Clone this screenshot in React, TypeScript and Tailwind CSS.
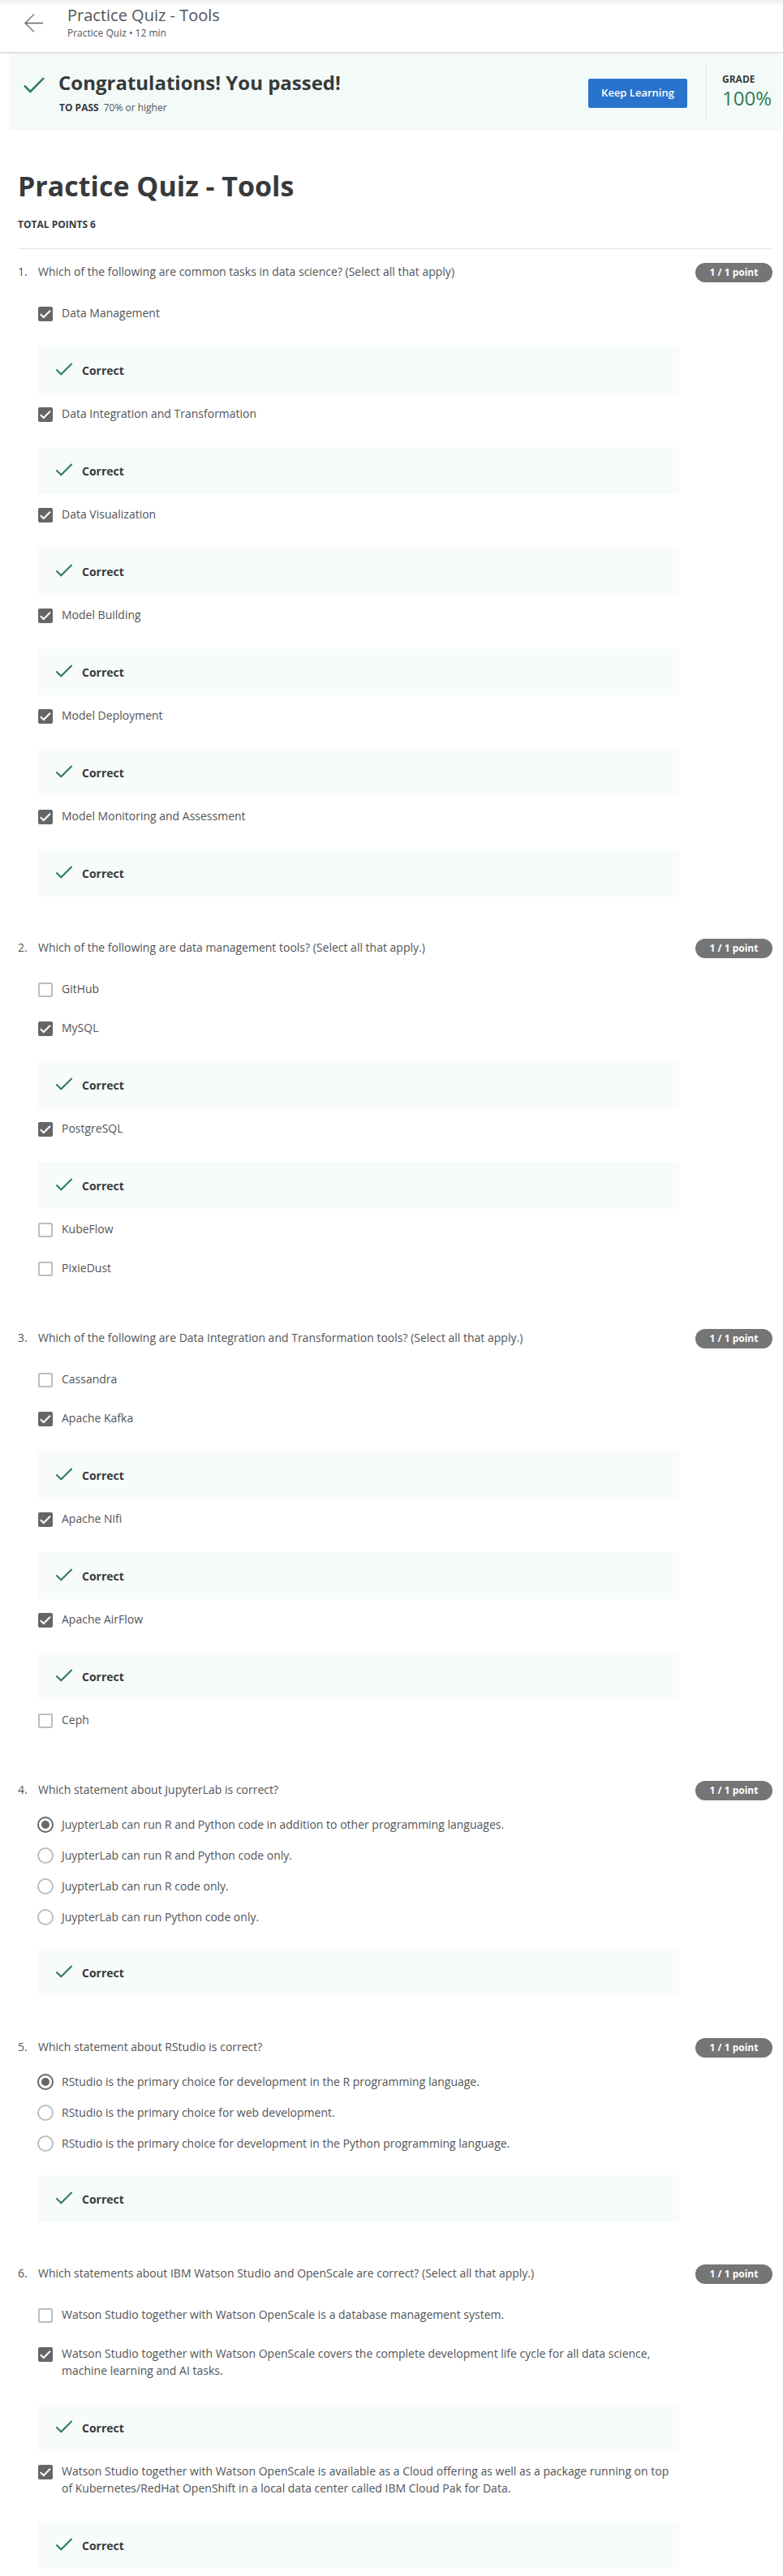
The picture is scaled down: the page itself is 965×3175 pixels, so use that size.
type Option = { label: string; checked?: boolean };
type Question = { text: string; kind: "checkbox" | "radio"; options: Option[] };

const questions: Question[] = [
  {
    text: "Which of the following are common tasks in data science? (Select all that apply)",
    kind: "checkbox",
    options: [
      { label: "Data Management", checked: true },
      { label: "Data Integration and Transformation", checked: true },
      { label: "Data Visualization", checked: true },
      { label: "Model Building", checked: true },
      { label: "Model Deployment", checked: true },
      { label: "Model Monitoring and Assessment", checked: true },
    ],
  },
  {
    text: "Which of the following are data management tools? (Select all that apply.)",
    kind: "checkbox",
    options: [
      { label: "GitHub" },
      { label: "MySQL", checked: true },
      { label: "PostgreSQL", checked: true },
      { label: "KubeFlow" },
      { label: "PixieDust" },
    ],
  },
  {
    text: "Which of the following are Data Integration and Transformation tools? (Select all that apply.)",
    kind: "checkbox",
    options: [
      { label: "Cassandra" },
      { label: "Apache Kafka", checked: true },
      { label: "Apache Nifi", checked: true },
      { label: "Apache AirFlow", checked: true },
      { label: "Ceph" },
    ],
  },
  {
    text: "Which statement about JupyterLab is correct?",
    kind: "radio",
    options: [
      { label: "JuypterLab can run R and Python code in addition to other programming languages.", checked: true },
      { label: "JuypterLab can run R and Python code only." },
      { label: "JuypterLab can run R code only." },
      { label: "JuypterLab can run Python code only." },
    ],
  },
  {
    text: "Which statement about RStudio is correct?",
    kind: "radio",
    options: [
      { label: "RStudio is the primary choice for development in the R programming language.", checked: true },
      { label: "RStudio is the primary choice for web development." },
      { label: "RStudio is the primary choice for development in the Python programming language." },
    ],
  },
  {
    text: "Which statements about IBM Watson Studio and OpenScale are correct? (Select all that apply.)",
    kind: "checkbox",
    options: [
      { label: "Watson Studio together with Watson OpenScale is a database management system." },
      {
        label:
          "Watson Studio together with Watson OpenScale covers the complete development life cycle for all data science, machine learning and AI tasks.",
        checked: true,
      },
      {
        label:
          "Watson Studio together with Watson OpenScale is available as a Cloud offering as well as a package running on top of Kubernetes/RedHat OpenShift in a local data center called IBM Cloud Pak for Data.",
        checked: true,
      },
    ],
  },
];

function Tick({ className }: { className: string }) {
  return (
    <svg viewBox="0 0 26 20" fill="none" stroke="#2f7d57" strokeWidth="2.6" className={className} aria-hidden="true">
      <path d="M1 10.6 8.4 17.8 25 1.2" />
    </svg>
  );
}

function Correct() {
  return (
    <div className="flex items-start gap-[11px] bg-[#f7fbfa] pt-[19px] pb-[18px] pl-[21px]">
      <Tick className="mt-px h-4 w-[22px]" />
      <p className="text-sm leading-[21px] font-bold text-[#373a3c]">Correct</p>
    </div>
  );
}

function CheckboxOption({ option, id }: { option: Option; id: string }) {
  return (
    <li className={option.checked ? "" : "pb-[13px]"}>
      <div className="flex gap-[11px]">
        <span className="mt-[3px] grid size-[18px] shrink-0">
          <input
            id={id}
            type="checkbox"
            defaultChecked={option.checked}
            className="peer col-start-1 row-start-1 size-[18px] appearance-none rounded-xs border-2 border-[#bdbdbd] bg-white checked:border-[#666] checked:bg-[#666]"
          />
          <svg
            viewBox="0 0 18 18"
            fill="none"
            stroke="#fff"
            strokeWidth="2"
            className="pointer-events-none invisible col-start-1 row-start-1 size-[18px] peer-checked:visible"
            aria-hidden="true"
          >
            <path d="M2.8 9.2 6.8 13 15 4.8" />
          </svg>
        </span>
        <label htmlFor={id} className="text-sm leading-[21px]">
          {option.label}
        </label>
      </div>
      {option.checked && (
        <div className="mt-[31px]">
          <Correct />
        </div>
      )}
    </li>
  );
}

function RadioOption({ option, id, name }: { option: Option; id: string; name: string }) {
  return (
    <li className="flex gap-[11px]">
      <span className="flex h-[21px] w-[18px] shrink-0 items-end justify-center">
        <input
          id={id}
          name={name}
          type="radio"
          defaultChecked={option.checked}
          className="size-5 shrink-0 appearance-none rounded-full border-2 border-[#bdbdbd] bg-clip-content p-[3px] checked:border-[#666] checked:bg-[#666]"
        />
      </span>
      <label htmlFor={id} className="text-sm leading-[21px]">
        {option.label}
      </label>
    </li>
  );
}

function QuestionBlock({ question, number }: { question: Question; number: number }) {
  const name = `q${number}`;
  return (
    <section>
      <div className="flex min-h-6 items-start">
        <span className="w-[25px] shrink-0 text-sm leading-[21px]">{number}.</span>
        <h3 className="grow text-sm leading-[21px]">{question.text}</h3>
        <span className="h-6 w-[95px] shrink-0 rounded-full bg-[#757575] text-center text-xs leading-6 font-bold text-white">
          1 / 1 point
        </span>
      </div>
      {question.kind === "checkbox" ? (
        <ul className="mt-[27px] mr-[115px] ml-[25px] flex flex-col gap-[14px]">
          {question.options.map((option, i) => (
            <CheckboxOption key={option.label} option={option} id={`${name}-${i}`} />
          ))}
        </ul>
      ) : (
        <div className="mt-[19px] mr-[115px] ml-[25px]">
          <ul className="mb-[29px] flex flex-col gap-[17px]">
            {question.options.map((option, i) => (
              <RadioOption key={option.label} option={option} id={`${name}-${i}`} name={name} />
            ))}
          </ul>
          <Correct />
        </div>
      )}
    </section>
  );
}

export default function App() {
  return (
    <div className="bg-white font-['Open_Sans',sans-serif] text-[#525457]">
      <header className="flex h-[66px] items-start border-b-2 border-[#e0e2e2] bg-linear-to-b from-[#eeeeee] to-white to-[8px] pl-[30px]">
        <a href="#back" aria-label="Back" className="mt-[17px] block">
          <svg viewBox="0 0 23 23" fill="none" stroke="#666" strokeWidth="1.3" className="size-[23px]">
            <path d="M23 11.5H1M12 .6 1 11.5 12 22.4" />
          </svg>
        </a>
        <div className="ml-[30px] pt-[5px]">
          <p className="text-xl leading-[27px] text-[#525457]">Practice Quiz - Tools</p>
          <p className="text-xs leading-[18px]">Practice Quiz • 12 min</p>
        </div>
      </header>

      <section className="mr-[3px] ml-3 flex h-[95px] items-start bg-[#f3faf8] pr-[10px] pl-[17px]">
        <Tick className="mt-[29px] h-5 w-[26px] shrink-0" />
        <div className="ml-[17px] grow pt-5">
          <h2 className="text-2xl leading-8 font-bold text-[#373a3c]">Congratulations! You passed!</h2>
          <p className="mt-[6px] pl-px text-xs leading-[18px]">
            <strong className="mr-[6px] font-bold text-[#373a3c]">TO PASS</strong>70% or higher
          </p>
        </div>
        <button
          type="button"
          className="mt-[31px] h-9 w-[122px] shrink-0 rounded-xs bg-[#2a73cc] text-[13px] font-semibold text-white"
        >
          Keep Learning
        </button>
        <div className="mt-[13px] ml-[23px] h-[68px] w-[82px] shrink-0 border-l border-[#e1e4e4] pt-[10px] pl-[19px]">
          <p className="text-xs leading-[18px] font-bold text-[#373a3c]">GRADE</p>
          <p className="text-2xl leading-7 text-[#2f7d57]">100%</p>
        </div>
      </section>

      <main className="mr-[13px] ml-[22px] pb-[9px]">
        <h1 className="pt-11 text-[34px] leading-[48px] font-bold text-[#373a3c]">Practice Quiz - Tools</h1>
        <p className="mt-[15px] border-b border-[#e5e5e5] pb-5 text-xs leading-[18px] font-bold text-[#373a3c]">
          TOTAL POINTS 6
        </p>
        <div className="mt-[17px] flex flex-col gap-[52px]">
          {questions.map((question, i) => (
            <QuestionBlock key={question.text} question={question} number={i + 1} />
          ))}
        </div>
      </main>
    </div>
  );
}
